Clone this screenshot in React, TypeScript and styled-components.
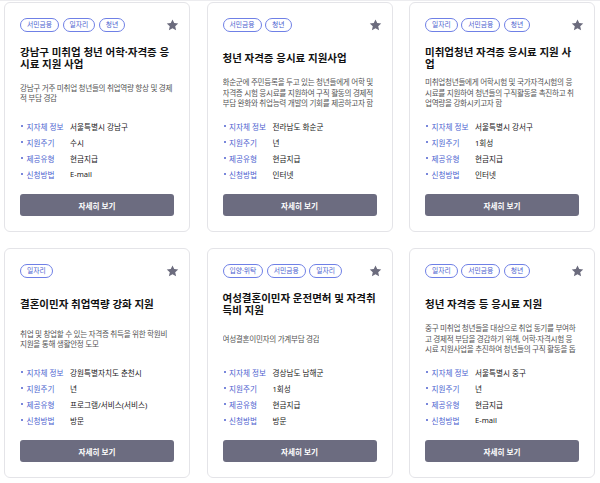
import React from "react";
import styled, { createGlobalStyle } from "styled-components";

const GlobalStyle = createGlobalStyle`
  html, body { margin: 0; padding: 0; background: #ffffff; }
  body { font-family: "Noto Sans", "Noto Sans CJK KR", sans-serif; color: #111; }
`;

type Policy = {
  tags: string[];
  title: string;
  desc: string;
  region: string;
  cycle: string;
  type: string;
  method: string;
};

const policies: Policy[] = [
  {
    tags: ["서민금융", "일자리", "청년"],
    title: "강남구 미취업 청년 어학·자격증 응시료 지원 사업",
    desc: "강남구 거주 미취업 청년들의 취업역량 향상 및 경제적 부담 경감",
    region: "서울특별시 강남구",
    cycle: "수시",
    type: "현금지급",
    method: "E-mail",
  },
  {
    tags: ["서민금융", "청년"],
    title: "청년 자격증 응시료 지원사업",
    desc: "화순군에 주민등록을 두고 있는 청년들에게 어학 및 자격증 시험 응시료를 지원하여 구직 활동의 경제적 부담 완화와 취업능력 개발의 기회를 제공하고자 함",
    region: "전라남도 화순군",
    cycle: "년",
    type: "현금지급",
    method: "인터넷",
  },
  {
    tags: ["일자리", "서민금융", "청년"],
    title: "미취업청년 자격증 응시료 지원 사업",
    desc: "미취업청년들에게 어학시험 및 국가자격시험의 응시료를 지원하여 청년들의 구직활동을 촉진하고 취업역량을 강화시키고자 함",
    region: "서울특별시 강서구",
    cycle: "1회성",
    type: "현금지급",
    method: "인터넷",
  },
  {
    tags: ["일자리"],
    title: "결혼이민자 취업역량 강화 지원",
    desc: "취업 및 창업할 수 있는 자격증 취득을 위한 학원비 지원을 통해 생활안정 도모",
    region: "강원특별자치도 춘천시",
    cycle: "년",
    type: "프로그램/서비스(서비스)",
    method: "방문",
  },
  {
    tags: ["입양·위탁", "서민금융", "일자리"],
    title: "여성결혼이민자 운전면허 및 자격취득비 지원",
    desc: "여성결혼이민자의 가계부담 경감",
    region: "경상남도 남해군",
    cycle: "1회성",
    type: "현금지급",
    method: "방문",
  },
  {
    tags: ["일자리", "서민금융", "청년"],
    title: "청년 자격증 등 응시료 지원",
    desc: "중구 미취업 청년들을 대상으로 취업 동기를 부여하고 경제적 부담을 경감하기 위해, 어학·자격시험 응시료 지원사업을 추진하여 청년들의 구직 활동을 돕고자 함",
    region: "서울특별시 중구",
    cycle: "년",
    type: "현금지급",
    method: "E-mail",
  },
];

const Page = styled.main`
  border-top: 1px solid #ececef;
  padding: 1px 4px 0 4px;
  display: grid;
  grid-template-columns: repeat(3, 186px);
  column-gap: 16.5px;
  row-gap: 16px;
`;

const Card = styled.article`
  box-sizing: border-box;
  height: 230px;
  border: 1px solid #e4e4e8;
  border-radius: 6px;
  background: #fff;
  padding: 15px;
  display: flex;
  flex-direction: column;
`;

const Header = styled.div`
  height: 14px;
  display: flex;
  align-items: center;
  justify-content: space-between;
`;

const Tags = styled.div`
  display: flex;
  gap: 3.5px;
`;

const Tag = styled.span`
  box-sizing: border-box;
  height: 13.5px;
  padding: 0 6px;
  border: 1px solid #6f80e6;
  border-radius: 7px;
  color: #4d5fcf;
  font-size: 6.8px;
  line-height: 11.5px;
  display: inline-flex;
  align-items: center;
  white-space: nowrap;
`;

const StarButton = styled.span`
  display: inline-flex;
  margin-right: -5px;
  color: #6b6b7d;
`;

const TitleBox = styled.div`
  margin-top: 10px;
  margin-right: -0.5px;
  height: 31px;
  display: flex;
  align-items: center;
`;

const Title = styled.h3`
  margin: 0;
  font-size: 10.5px;
  line-height: 12px;
  font-weight: 700;
  color: #111;
`;

const DescBox = styled.div`
  margin-top: 3px;
  margin-right: 0.95px;
  height: 34px;
  display: flex;
  align-items: center;
`;

const Desc = styled.p`
  margin: 0;
  font-size: 7.6px;
  letter-spacing: -0.3px;
  line-height: 10.5px;
  max-height: 31.5px;
  overflow: hidden;
  color: #555;
`;

const InfoList = styled.ul`
  list-style: none;
  margin: 8px 0 0 0;
  padding: 0;
`;

const InfoRow = styled.li`
  height: 16px;
  display: grid;
  grid-template-columns: 6.5px 43.5px 1fr;
  align-items: center;
  font-size: 7.6px;
`;

const Bullet = styled.span`
  width: 2px;
  height: 2px;
  border-radius: 50%;
  background: #4d5fcf;
  margin-left: 1px;
`;

const Label = styled.span`
  color: #4d5fcf;
  white-space: nowrap;
`;

const Value = styled.span`
  color: #222;
  white-space: nowrap;
`;

const DetailButton = styled.button`
  margin-top: 12px;
  height: 22px;
  width: 100%;
  border: none;
  border-radius: 3px;
  background: #6c6c80;
  color: #fff;
  font-family: inherit;
  font-size: 7.6px;
  font-weight: 700;
  cursor: pointer;
`;

const Star = () => (
  <svg width="13" height="12" viewBox="0 0 24 23" aria-hidden="true">
    <path
      fill="currentColor"
      d="M12 0.8l3.3 7.1 7.7 0.8-5.8 5.2 1.7 7.6L12 17.6l-6.9 3.9 1.7-7.6L1 8.7l7.7-0.8z"
    />
  </svg>
);

const infoLabels: [string, keyof Policy][] = [
  ["지자체 정보", "region"],
  ["지원주기", "cycle"],
  ["제공유형", "type"],
  ["신청방법", "method"],
];

const PolicyCard = ({ p }: { p: Policy }) => (
  <Card>
    <Header>
      <Tags>
        {p.tags.map((t) => (
          <Tag key={t}>{t}</Tag>
        ))}
      </Tags>
      <StarButton>
        <Star />
      </StarButton>
    </Header>
    <TitleBox>
      <Title>{p.title}</Title>
    </TitleBox>
    <DescBox>
      <Desc>{p.desc}</Desc>
    </DescBox>
    <InfoList>
      {infoLabels.map(([label, key]) => (
        <InfoRow key={label}>
          <Bullet />
          <Label>{label}</Label>
          <Value>{p[key] as string}</Value>
        </InfoRow>
      ))}
    </InfoList>
    <DetailButton>자세히 보기</DetailButton>
  </Card>
);

export default function App() {
  return (
    <>
      <GlobalStyle />
      <Page>
        {policies.map((p, i) => (
          <PolicyCard key={i} p={p} />
        ))}
      </Page>
    </>
  );
}
